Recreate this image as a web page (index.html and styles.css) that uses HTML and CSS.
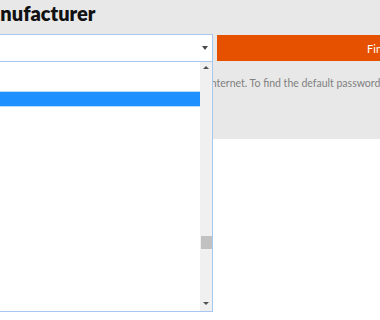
FILE: index.html
```html
<!DOCTYPE html>
<html lang="en">
<head>
    <meta charset="UTF-8">
    <meta name="viewport" content="width=device-width, initial-scale=1.0">
    <title>Default Router Passwords</title>
    <link rel="stylesheet" href="styles.css">
</head>
<body>

    <!-- Manufacturer picker -->
    <div class="finder">
        <h1 class="finder-title">Manufacturer</h1>

        <div class="finder-row">
            <div class="select">
                <span class="select-arrow"></span>
            </div>
            <button class="find-btn">Find password</button>
        </div>

        <p class="finder-note">You need your router password to connect to the internet. To find the default password for your router, pick its maker above.</p>

        <!-- Open dropdown list -->
        <div class="dropdown">
            <ul class="options">
                <li>Select manufacturer</li>
                <li>2Wire</li>
                <li class="active">3Com</li>
                <li>Actiontec</li>
                <li>Alcatel</li>
                <li>Apple</li>
                <li>Arris</li>
                <li>ASUS</li>
                <li>AT&amp;T</li>
                <li>Belkin</li>
                <li>Billion</li>
                <li>Buffalo</li>
                <li>Cisco</li>
                <li>D-Link</li>
                <li>Draytek</li>
                <li>Huawei</li>
                <li>Linksys</li>
            </ul>
            <div class="scrollbar">
                <span class="scroll-up"></span>
                <div class="scroll-track">
                    <div class="scroll-thumb"></div>
                </div>
                <span class="scroll-down"></span>
            </div>
        </div>
    </div>

</body>
</html>
```

FILE: styles.css
```css
/* Basic reset */
* {
    margin: 0;
    padding: 0;
    box-sizing: border-box;
}

html, body {
    overflow: hidden;
}

body {
    font-family: Lato, "Open Sans", Arial, sans-serif;
    background: #fff;
    width: 380px;
    height: 320px;
}

/* Grey finder band */
.finder {
    position: relative;
    background: #e8e8e8;
    height: 139px;
    margin-left: -150px;
    width: 900px;
}

.finder-title {
    font-size: 20px;
    font-weight: 800;
    color: #111;
    line-height: 25px;
    padding-top: 1px;
    padding-left: 121px;
    margin-bottom: 8px;
    white-space: nowrap;
}

.finder-row {
    display: flex;
    align-items: center;
    gap: 4px;
}

.select {
    width: 363px;
    height: 28px;
    background: #fff;
    border: 1px solid #a9c6ee;
    display: flex;
    align-items: center;
    justify-content: flex-end;
    padding-right: 4px;
}

.select-arrow {
    width: 0;
    height: 0;
    border-left: 3px solid transparent;
    border-right: 3px solid transparent;
    border-top: 4px solid #4a4a4a;
}

.find-btn {
    width: 370px;
    height: 26px;
    background: #e65100;
    color: #fff;
    border: none;
    font-family: inherit;
    font-size: 11px;
}

.finder-note {
    margin-top: 14px;
    font-size: 10.5px;
    line-height: 14px;
    color: #808080;
    white-space: nowrap;
    padding-left: 130px;
}

/* Dropdown list over the page */
.dropdown {
    position: absolute;
    top: 62px;
    left: 0;
    width: 363px;
    height: 250px;
    background: #fff;
    border: 1px solid #a9c6ee;
    border-top: none;
    display: flex;
}

.options {
    flex: 1;
    list-style: none;
    padding-top: 2px;
    overflow: hidden;
    font-size: 11px;
    color: #222;
}

.options li {
    height: 14px;
    line-height: 14px;
    padding-left: 4px;
}

.options li.active {
    background: #1e90ff;
    color: #fff;
    box-shadow: 0 0 0 1px #bcdcff;
}

.scrollbar {
    width: 12px;
    background: #f0f0f0;
    display: flex;
    flex-direction: column;
    align-items: center;
}

.scroll-up,
.scroll-down {
    width: 0;
    height: 0;
    border-left: 3px solid transparent;
    border-right: 3px solid transparent;
}

.scroll-up {
    margin: 4px 0 5px;
    border-bottom: 3px solid #505050;
}

.scroll-down {
    margin: 4px 0 6px;
    border-top: 3px solid #505050;
}

.scroll-track {
    flex: 1;
    width: 100%;
    padding-left: 1px;
}

.scroll-thumb {
    margin-top: 162px;
    height: 13px;
    background: #c1c1c1;
}
```
